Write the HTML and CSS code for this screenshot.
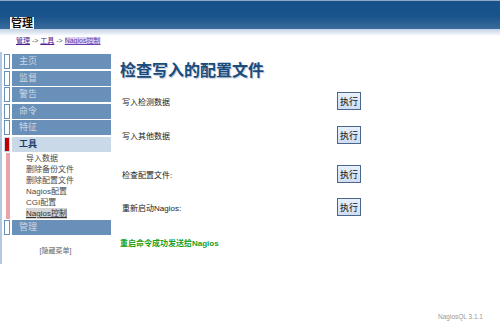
FILE: index.html
```html
<!DOCTYPE html>
<html lang="zh-CN">
<head>
<meta charset="utf-8">
<title>NagiosQL</title>
<link rel="stylesheet" href="styles.css">
</head>
<body>
<div class="header">
  <div class="tab">管理</div>
</div>
<div class="stripe"></div>
<div class="crumbs"><a href="#">管理</a> -&gt; <a href="#">工具</a> -&gt; <a href="#" class="cur">Nagios控制</a></div>
<div class="layout">
  <div class="sidebar">
    <div class="nav-item"><span class="nav-mark"></span><span class="nav-bar">主页</span></div>
    <div class="nav-item"><span class="nav-mark"></span><span class="nav-bar">监督</span></div>
    <div class="nav-item"><span class="nav-mark"></span><span class="nav-bar">警告</span></div>
    <div class="nav-item"><span class="nav-mark"></span><span class="nav-bar">命令</span></div>
    <div class="nav-item"><span class="nav-mark"></span><span class="nav-bar">特征</span></div>
    <div class="nav-item active"><span class="nav-mark"></span><span class="nav-bar">工具</span></div>
    <div class="submenu">
      <a href="#">导入数据</a>
      <a href="#">删除备份文件</a>
      <a href="#">删除配置文件</a>
      <a href="#">Nagios配置</a>
      <a href="#">CGI配置</a>
      <a href="#" class="sub-cur">Nagios控制</a>
    </div>
    <div class="nav-item"><span class="nav-mark"></span><span class="nav-bar">管理</span></div>
    <div class="hide-menu">[隐藏菜单]</div>
  </div>
  <div class="main">
    <h1>检查写入的配置文件</h1>
    <div class="row r1"><span>写入检测数据</span><button>执行</button></div>
    <div class="row r2"><span>写入其他数据</span><button>执行</button></div>
    <div class="row r3"><span>检查配置文件:</span><button>执行</button></div>
    <div class="row r4"><span>重新启动Nagios:</span><button>执行</button></div>
    <div class="msg">重启命令成功发送给Nagios</div>
  </div>
</div>
<div class="footer">NagiosQL 3.1.1</div>
</body>
</html>
```
FILE: styles.css
```css
html, body {
  margin: 0;
  padding: 0;
  background: #fff;
  font-family: "Liberation Sans", "Noto Sans CJK SC", sans-serif;
  width: 500px;
  height: 329px;
  overflow: hidden;
}
.header {
  height: 28px;
  border-top: 1px solid #8ea9c8;
  background: linear-gradient(#17508a 0%, #1a548c 55%, #3a6c9c 100%);
  display: flex;
  align-items: flex-end;
  padding-left: 10px;
}
.tab {
  background: #fff;
  color: #111;
  font-weight: bold;
  font-size: 11px;
  line-height: 12px;
  padding: 0 1px;
  white-space: nowrap;
}
.stripe {
  height: 7px;
  background: linear-gradient(#c3d2e4 0%, #d8e3ef 40%, #eef3f8 75%, #fff 100%);
}
.crumbs {
  padding-left: 16px;
  font-size: 7px;
  line-height: 10px;
  height: 10px;
  color: #555;
}
.crumbs a {
  color: #551a8b;
}
.crumbs a.cur {
  background: #dcd2f0;
  color: #6a3fb0;
}
.layout {
  display: flex;
  margin-top: 6px;
}
.sidebar {
  width: 109px;
  border-left: 2px solid #b4c9df;
  height: 210px;
  padding-top: 2px;
}
.nav-item {
  display: flex;
  gap: 2px;
  height: 15px;
  margin: 0 0 1.5px 2px;
}
.nav-mark {
  width: 4px;
  border: 1px solid #6890b8;
  background: #fff;
}
.nav-bar {
  flex: 1;
  background: #6890b8;
  color: #c9d7e6;
  font-size: 9px;
  line-height: 15px;
  padding-left: 7px;
}
.nav-item.active .nav-mark {
  background: #c00000;
  border-color: #c8d8e8;
}
.nav-item.active .nav-bar {
  background: #c9d9e8;
  color: #1b3f6e;
  font-weight: bold;
}
.submenu {
  display: flex;
  flex-direction: column;
  align-items: flex-start;
  margin: 0 0 1px 4px;
  border-left: 4px solid #e8a4a8;
  padding: 0 0 0 16px;
}
.submenu a {
  font-size: 8px;
  line-height: 11px;
  color: #4a4a4a;
  text-decoration: none;
}
.submenu a.sub-cur {
  background: #d4d4d4;
  color: #333;
  text-decoration: underline;
}
.hide-menu {
  margin-top: 10px;
  text-align: center;
  font-size: 7px;
  color: #666;
  padding-right: 2px;
}
.main {
  padding-left: 9px;
  width: 241px;
}
h1 {
  margin: 8px 0 0 0;
  font-size: 16px;
  line-height: 22px;
  color: #1b4b7c;
  text-shadow: 1px 1px 1px #b8c8d8;
  font-weight: bold;
}
.row {
  display: flex;
  justify-content: space-between;
  align-items: center;
  height: 18px;
  font-size: 8px;
  color: #222;
  padding-left: 2px;
}
.r1 { margin-top: 10px; }
.r2 { margin-top: 16px; }
.r3 { margin-top: 21px; }
.r4 { margin-top: 15px; }
button {
  font-family: "Noto Sans CJK SC", sans-serif;
  font-size: 9px;
  height: 18px;
  width: 24px;
  padding: 0;
  border: 1px solid #4a6688;
  background: linear-gradient(#e8f0fc, #cfdcf2);
  color: #111;
}
.msg {
  margin-top: 21px;
  font-size: 8px;
  font-weight: bold;
  color: #20a020;
}
.footer {
  position: absolute;
  right: 17px;
  top: 313px;
  font-size: 6.5px;
  color: #999;
}
```
